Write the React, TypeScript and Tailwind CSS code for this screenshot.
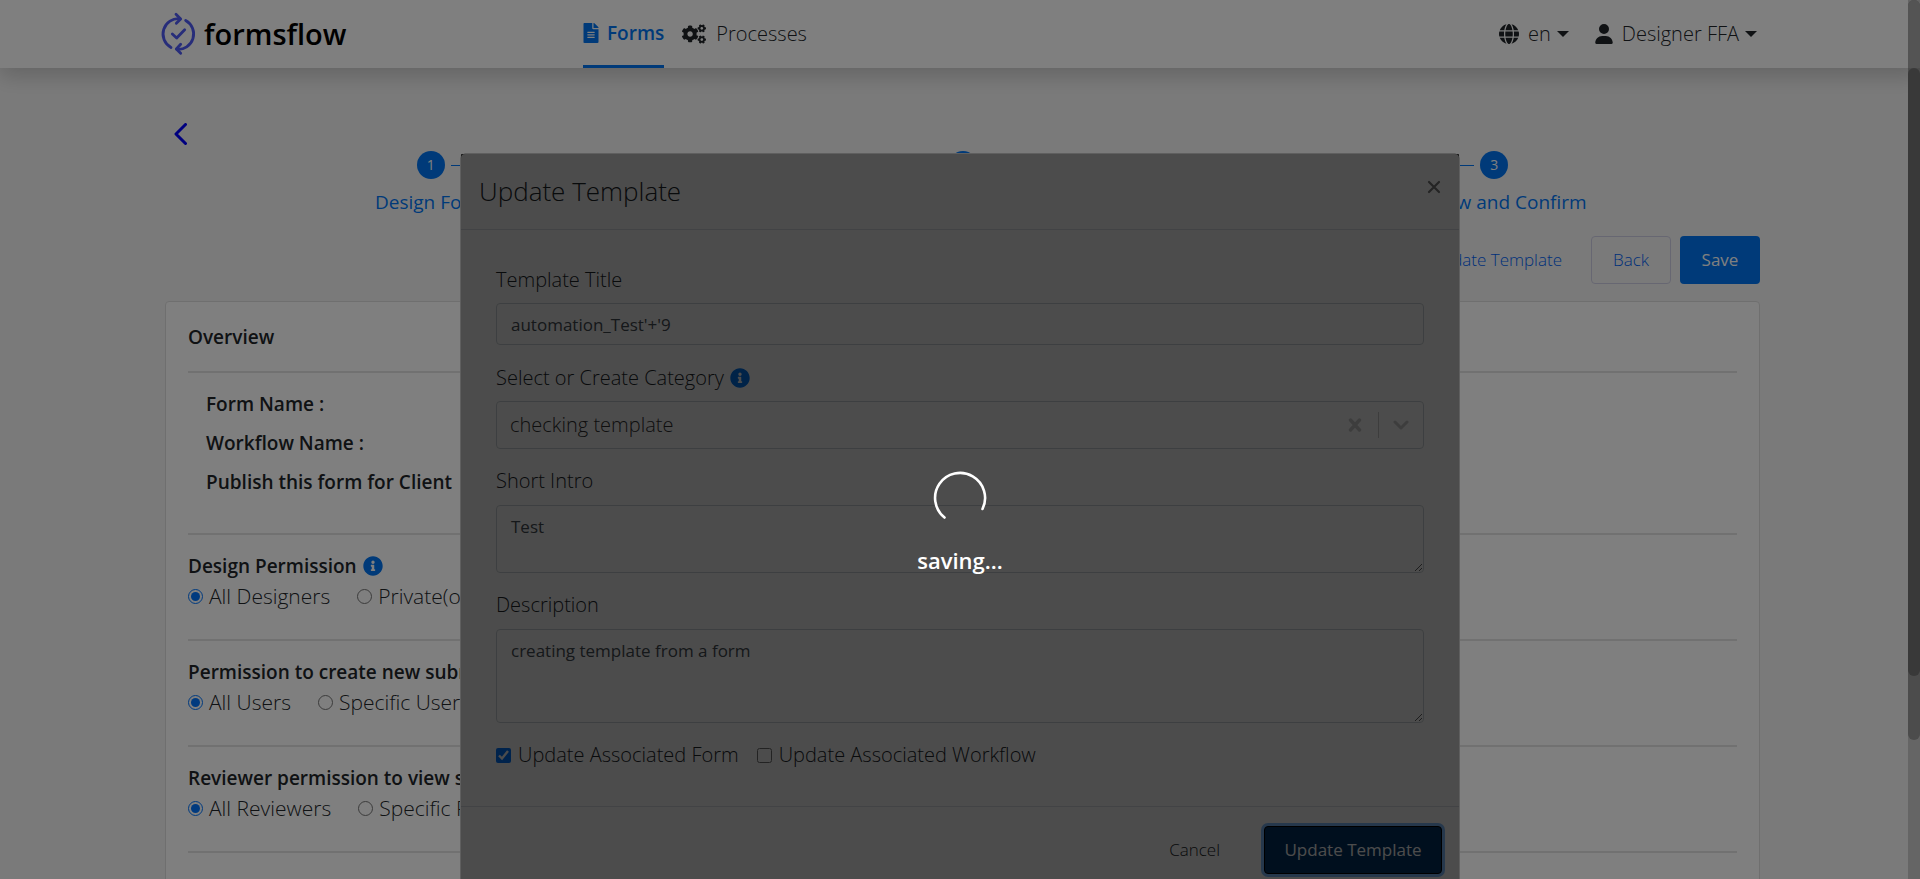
import type { ReactNode } from "react";
import { FaCogs, FaFileAlt, FaInfoCircle } from "react-icons/fa";
import { FaGlobe, FaUser } from "react-icons/fa6";

const Caret = () => (
  <svg className="h-[6px] w-[12px]" viewBox="0 0 12 6" fill="currentColor" aria-hidden="true">
    <path d="M0 0h12L6 6z" />
  </svg>
);

const Logo = () => (
  <svg className="h-[46px] w-[37px]" viewBox="17 18 111 138" fill="none" stroke="#4f5bf5" strokeWidth="8.5" strokeLinecap="round" strokeLinejoin="round" aria-hidden="true">
    <path d="M50 127.400A46 46 0 0 1 77 41.300" />
    <path d="M65 28L79 42L66 55" />
    <path d="M94 46.600A46 46 0 0 1 67 132.700" />
    <path d="M79 118L66 132L79 145" />
    <path d="M54 87L67 99L91 74" />
  </svg>
);

function Header() {
  return (
    <header className="relative z-10 bg-white shadow-[0_8px_20px_rgba(0,0,0,0.18)]">
      <div className="mx-auto flex h-[68px] max-w-[1600px] items-stretch">
        <a href="#home" className="flex w-[423px] items-center gap-[7px] text-[29px] font-semibold text-black">
          <Logo />
          formsflow
        </a>
        <nav className="flex items-stretch gap-[18px]">
          <a href="#forms" className="flex items-center gap-2 border-b-[3px] border-[#0075f2] text-[19px] font-semibold text-[#0075f2]">
            <FaFileAlt className="h-[20px] w-[16px]" />
            Forms
          </a>
          <a href="#processes" className="flex items-center gap-[10px] font-light">
            <FaCogs className="size-[24px]" />
            Processes
          </a>
        </nav>
        <div className="ml-auto flex items-center gap-[26px] pr-[3px] font-light">
          <button type="button" className="flex items-center gap-[6px]">
            <FaGlobe className="mr-[3px] size-[20px]" />
            en
            <Caret />
          </button>
          <button type="button" className="flex items-center gap-[6px]">
            <FaUser className="mr-[3px] h-[20px] w-[18px]" />
            Designer FFA
            <Caret />
          </button>
        </div>
      </div>
    </header>
  );
}

const steps = ["Design Form", "Associate this form with a workflow", "Preview and Confirm"];

function Stepper() {
  return (
    <ol className="grid grid-cols-3">
      {steps.map((label, i) => (
        <li key={label} className="flex flex-col items-center gap-[9px]">
          <div className="flex w-full items-center gap-[6px]">
            <span className={i === 0 ? "h-px flex-1" : "h-px flex-1 bg-[#0075f2]"} />
            <span className="flex size-[28px] items-center justify-center rounded-full bg-[#0075f2] text-[14px] text-white">{i + 1}</span>
            <span className={i === 2 ? "h-px flex-1" : "h-px flex-1 bg-[#0075f2]"} />
          </div>
          <span className="text-[19px] leading-[28px] text-[#0075f2]">{label}</span>
        </li>
      ))}
    </ol>
  );
}

function Permission({ title, name, options, info }: { title: string; name: string; options: string[]; info?: boolean }) {
  return (
    <fieldset className="h-[106px] border-b-2 border-[#e2e2e2] pt-[16px]">
      <div className="flex h-[30px] w-fit items-center gap-[6px] text-[19px] font-semibold">
        {title}
        {info && <FaInfoCircle className="size-[20px] text-[#0075f2]" />}
      </div>
      <div className="flex h-[30px] items-center gap-[27px] text-[21px] font-light">
        {options.map((o, i) => (
          <label key={o} className="flex items-center gap-[6px]">
            <input type="radio" name={name} defaultChecked={i === 0} className="size-[15px] accent-[#0075ff]" />
            {o}
          </label>
        ))}
      </div>
    </fieldset>
  );
}

function Page() {
  return (
    <main className="mx-auto max-w-[1600px] pl-[5px]">
      <div className="flex h-[83px] items-end pb-[6px] pl-[9px]">
        <button type="button" aria-label="Go back" className="text-[#0000ff]">
          <svg className="h-[22px] w-[13px]" viewBox="0 0 13 22" fill="none" stroke="currentColor" strokeWidth="3" strokeLinecap="round" strokeLinejoin="round">
            <path d="M11.500 1.500L2 11l9.500 9.500" />
          </svg>
        </button>
      </div>
      <Stepper />
      <div className="mt-[20px] flex items-center justify-end gap-[9px] text-[17px]">
        <button type="button" className="mr-5 font-light text-[#0062f5]">Update Template</button>
        <button type="button" className="h-[48px] w-[80px] rounded border border-[#cfcfe4] font-light text-[#0062f5]">Back</button>
        <button type="button" className="h-[48px] w-[80px] rounded bg-[#0075f2] text-white">Save</button>
      </div>
      <section className="mt-[17px] min-h-[700px] rounded border border-[#dfdfdf] bg-white px-[22px]">
        <h2 className="flex h-[71px] items-center border-b-2 border-[#e2e2e2] text-[19px] font-semibold">Overview</h2>
        <div className="h-[162px] border-b-2 border-[#e2e2e2] pt-[12px] pl-[18px] text-[19px] leading-[39px] font-semibold">
          <p className="w-fit">Form Name :</p>
          <p className="w-fit">Workflow Name :</p>
          <p className="w-fit">Publish this form for Client</p>
        </div>
        <Permission title="Design Permission" name="design" options={["All Designers", "Private(only You)"]} info />
        <Permission title="Permission to create new submissions" name="create" options={["All Users", "Specific User Group/s"]} />
        <Permission title="Reviewer permission to view submissions" name="review" options={["All Reviewers", "Specific Reviewers"]} />
      </section>
    </main>
  );
}

function Label({ htmlFor, children }: { htmlFor: string; children: ReactNode }) {
  return <label htmlFor={htmlFor} className="flex h-[30px] items-center gap-[6px]">{children}</label>;
}

const field = "block w-full rounded border border-[#ced4da] bg-white px-[14px] text-[17px] font-normal text-[#495057]";

function TemplateModal() {
  return (
    <div role="dialog" aria-label="Update Template" className="w-[1000px] max-w-full rounded-[5px] border border-[#5f5f5f] bg-white font-light">
      <div className="relative">
        <div className="flex h-[76px] items-start justify-between border-b border-[#dee2e6] px-[18px]">
          <h1 className="pt-[19px] text-[26px] leading-[36px]">Update Template</h1>
          <button type="button" aria-label="Close" className="mt-[26px] text-[#7a7a7a]">
            <svg className="size-[14px]" viewBox="0 0 14 14" stroke="currentColor" strokeWidth="2.200" strokeLinecap="round">
              <path d="M2 2l10 10M12 2L2 12" />
            </svg>
          </button>
        </div>
        <div className="h-[576px] px-[35px] pt-[35px]">
          <Label htmlFor="title">Template Title</Label>
          <input id="title" defaultValue="automation_Test'+'9" className={`${field} mt-[8px] h-[42px]`} />
          <div className="mt-[18px]">
            <Label htmlFor="category">
              Select or Create Category
              <FaInfoCircle className="size-[20px] text-[#0075f2]" />
            </Label>
          </div>
          <div className="mt-[8px] flex h-[48px] items-center rounded border border-[#ced4da] pl-[13px] text-[#333]">
            <input id="category" defaultValue="checking template" className="min-w-0 flex-1 bg-transparent" />
            <button type="button" aria-label="Clear category" className="mr-[16px] text-[#ccc]">
              <svg className="size-[14px]" viewBox="0 0 14 14" stroke="currentColor" strokeWidth="3.400" strokeLinecap="round">
                <path d="M2.500 2l9 10M11.500 2l-9 10" />
              </svg>
            </button>
            <span className="h-[26px] w-px bg-[#ccc]" />
            <button type="button" aria-label="Open category list" className="mx-[14px] text-[#ccc]">
              <svg className="h-[10px] w-[16px]" viewBox="0 0 16 10" fill="none" stroke="currentColor" strokeWidth="3" strokeLinecap="round" strokeLinejoin="round">
                <path d="M2 2l6 6 6-6" />
              </svg>
            </button>
          </div>
          <div className="mt-[17px]">
            <Label htmlFor="intro">Short Intro</Label>
          </div>
          <textarea id="intro" defaultValue="Test" className={`${field} mt-[9px] h-[68px] py-[8px] leading-[26px]`} />
          <div className="mt-[17px]">
            <Label htmlFor="description">Description</Label>
          </div>
          <textarea id="description" defaultValue="creating template from a form" className={`${field} mt-[9px] h-[94px] py-[8px] leading-[26px]`} />
          <div className="mt-[17px] flex gap-[18px]">
            <label className="flex items-center gap-[7px]">
              <input type="checkbox" defaultChecked className="size-[15px] accent-[#0075ff]" />
              Update Associated Form
            </label>
            <label className="flex items-center gap-[7px]">
              <input type="checkbox" className="size-[15px] accent-[#0075ff]" />
              Update Associated Workflow
            </label>
          </div>
        </div>
        <div className="flex h-[86px] items-center justify-end gap-[44px] border-t border-[#dee2e6] px-[17px] text-[17px]">
          <button type="button">Cancel</button>
          <button type="button" className="h-[48px] w-[178px] rounded border border-black bg-[#003366] font-normal text-white shadow-[0_0_0_3px_#80bdff]">
            Update Template
          </button>
        </div>
        <div role="status" className="absolute inset-0 flex flex-col items-center justify-center gap-[19px] bg-black/70 text-[22px] leading-[32px] font-semibold text-white">
          <svg className="size-[54px]" viewBox="-27 -27 54 54" fill="none" stroke="currentColor" strokeWidth="2.600" strokeLinecap="round" aria-hidden="true">
            <path d="M-15.500 19.500A25 25 0 1 1 22.500 11" />
          </svg>
          saving...
        </div>
      </div>
    </div>
  );
}

export default function App() {
  return (
    <div className="relative h-screen overflow-hidden bg-[#f5f5f5] font-['Open_Sans',sans-serif] text-[20px] leading-[30px] text-[#212529]">
      <Header />
      <Page />
      <div className="absolute inset-0 z-20 flex items-start justify-center bg-black/50 pt-[153px]">
        <TemplateModal />
      </div>
      <div className="absolute inset-y-0 right-0 z-30 w-[12px] bg-[#656565]" aria-hidden="true">
        <div className="h-[84.200%] overflow-hidden rounded-full bg-[#4c4c4c]">
          <div className="h-[68px] bg-[#545454]" />
          <div className="h-[82.200%] rounded-full bg-[#393939]" />
        </div>
      </div>
    </div>
  );
}
